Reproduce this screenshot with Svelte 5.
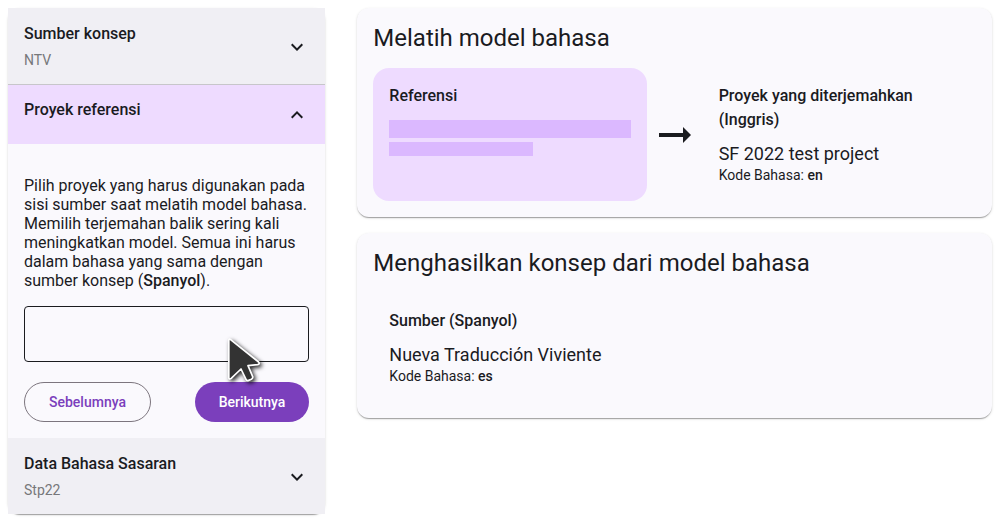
<script>
  let project = $state('');
</script>

<svelte:head>
  <title>Proyek referensi</title>
</svelte:head>

{#snippet chevron(up)}
  <svg class="chevron" class:up viewBox="0 0 24 24" aria-hidden="true">
    <path d="M16.59 8.59 12 13.17 7.41 8.59 6 10l6 6 6-6z" />
  </svg>
{/snippet}

<main class="page">
  <section class="stepper">
    <button class="step" type="button" aria-expanded="false">
      <span class="label">
        <span class="name">Sumber konsep</span>
        <span class="value">NTV</span>
      </span>
      {@render chevron(false)}
    </button>

    <button class="step active" type="button" aria-expanded="true">
      <span class="label">
        <span class="name">Proyek referensi</span>
      </span>
      {@render chevron(true)}
    </button>

    <div class="body">
      <label class="help" for="project">
        Pilih proyek yang harus digunakan pada sisi sumber saat melatih model bahasa. Memilih
        terjemahan balik sering kali meningkatkan model. Semua ini harus dalam bahasa yang sama
        dengan sumber konsep (<b>Spanyol</b>).
      </label>
      <input id="project" type="text" bind:value={project} />
      <div class="actions">
        <button class="outlined" type="button">Sebelumnya</button>
        <div class="next">
          <button class="filled" type="button">Berikutnya</button>
          <svg class="pointer" viewBox="0 0 44 56" aria-hidden="true">
            <path
              d="M4.8 5.6 Q4.8 3.4 6.6 4.6 L34.6 27 Q36.2 29 33.6 29.6 L24 30.6 L28.8 41.8 Q29 43.4 27.4 44.2 L24.6 45.4 Q22.8 46 22 44.4 L17 34 L7.2 43.4 Q5 44.8 4.8 42.6 Z"
            />
          </svg>
        </div>
      </div>
    </div>

    <button class="step" type="button" aria-expanded="false">
      <span class="label">
        <span class="name">Data Bahasa Sasaran</span>
        <span class="value">Stp22</span>
      </span>
      {@render chevron(false)}
    </button>
  </section>

  <div class="overview">
    <section class="card">
      <h1>Melatih model bahasa</h1>
      <div class="training">
        <div class="box reference">
          <h2>Referensi</h2>
          <div class="bar"></div>
          <div class="bar short"></div>
        </div>
        <svg class="arrow" viewBox="0 0 32 16" aria-hidden="true">
          <path d="M0 6h24V0l8 8-8 8v-6H0z" />
        </svg>
        <div class="box">
          <h2>Proyek yang diterjemahkan (Inggris)</h2>
          <p class="project">SF 2022 test project</p>
          <p class="code">Kode Bahasa: <b>en</b></p>
        </div>
      </div>
    </section>

    <section class="card">
      <h1>Menghasilkan konsep dari model bahasa</h1>
      <div class="box">
        <h2>Sumber (Spanyol)</h2>
        <p class="project">Nueva Traducción Viviente</p>
        <p class="code">Kode Bahasa: <b>es</b></p>
      </div>
    </section>
  </div>
</main>

<style>
  :global(body) {
    margin: 0;
    background: #fff;
  }

  .page {
    display: grid;
    grid-template-columns: 1fr 2fr;
    gap: 32px;
    align-items: start;
    padding: 8px;
    font-family: Roboto, sans-serif;
    font-size: 16px;
    color: #1a1b1f;
  }

  .stepper,
  .card {
    background: #faf9fd;
    border-radius: 12px;
    box-shadow:
      0 2px 1px -1px rgba(0, 0, 0, 0.2),
      0 1px 1px rgba(0, 0, 0, 0.14),
      0 1px 3px rgba(0, 0, 0, 0.12);
  }

  .stepper {
    display: flex;
    flex-direction: column;
  }

  button,
  input {
    box-sizing: border-box;
    font: inherit;
    color: inherit;
  }

  button {
    cursor: pointer;
  }

  .step {
    display: flex;
    align-items: center;
    justify-content: space-between;
    padding: 13px 16px 12px;
    border: 0;
    background: #f0eff4;
    text-align: left;
  }

  .step:not(.active) {
    min-height: 76px;
  }

  .active {
    min-height: 60px;
    border-top: 1px solid #c7c6ca;
    background: #eedbff;
  }

  .active .label {
    align-self: flex-start;
  }

  .label {
    display: flex;
    flex-direction: column;
    gap: 2px;
    line-height: 24px;
  }

  .name {
    font-weight: 500;
  }

  .value {
    font-size: 14px;
    color: #77777a;
  }

  .chevron {
    width: 24px;
    height: 24px;
    fill: #1a1b1f;
  }

  .up {
    transform: rotate(180deg);
  }

  .body {
    display: flex;
    flex-direction: column;
    padding: 32px 16px 16px;
  }

  .help {
    line-height: 19px;
  }

  b {
    font-weight: 500;
  }

  input {
    width: 100%;
    height: 56px;
    margin: 16px 0 20px;
    padding: 0 16px;
    border: 1px solid #1a1b1f;
    border-radius: 4px;
    background: transparent;
  }

  .actions {
    display: flex;
    justify-content: space-between;
  }

  .outlined,
  .filled {
    height: 40px;
    padding: 0 24px;
    border: 0;
    border-radius: 20px;
    font-size: 14px;
    font-weight: 500;
  }

  .outlined {
    border: 1px solid #7c757e;
    background: transparent;
    color: #7b3fbc;
  }

  .filled {
    background: #7b3fbc;
    color: #fff;
  }

  .next {
    position: relative;
  }

  .pointer {
    position: absolute;
    left: 29px;
    top: -47px;
    width: 44px;
    height: 56px;
    overflow: visible;
    fill: #333;
    stroke: #fff;
    stroke-width: 1.7;
    stroke-linejoin: round;
    filter: drop-shadow(2px 2px 2px rgba(0, 0, 0, 0.85));
    pointer-events: none;
  }

  .overview {
    display: flex;
    flex-direction: column;
    gap: 16px;
  }

  .card {
    padding: 16px;
  }

  h1,
  h2,
  p {
    margin: 0;
  }

  h1 {
    margin-bottom: 16px;
    font-size: 24px;
    font-weight: 400;
    line-height: 28px;
  }

  h2 {
    margin-bottom: 10px;
    font-size: 16px;
    font-weight: 500;
    line-height: 24px;
  }

  .training {
    display: grid;
    grid-template-columns: 1fr auto 1fr;
    align-items: stretch;
  }

  .box {
    padding: 16px;
  }

  .reference {
    border-radius: 16px;
    background: #eedbff;
  }

  .bar {
    height: 18px;
    margin-top: 12px;
    background: #dbb8ff;
  }

  .short {
    width: 144px;
    max-width: 100%;
    height: 14px;
    margin-top: 4px;
  }

  .arrow {
    align-self: center;
    width: 32px;
    height: 16px;
    margin: 0 12px;
    fill: #1a1b1f;
  }

  .project {
    font-size: 18px;
    line-height: 24px;
  }

  .code {
    font-size: 14px;
    line-height: 19px;
  }
</style>
